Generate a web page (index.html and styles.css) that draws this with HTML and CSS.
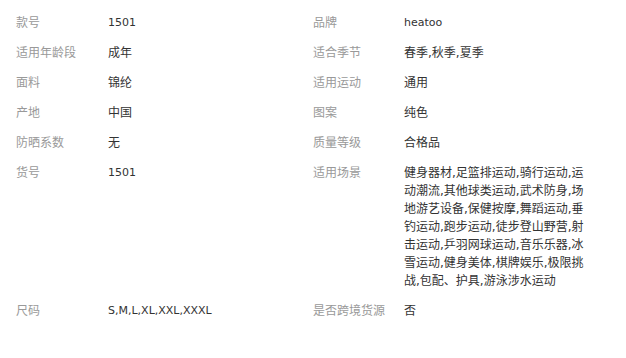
FILE: index.html
```html
<!DOCTYPE html>
<html lang="zh-CN">
<head>
<meta charset="utf-8">
<title>商品参数</title>
<link rel="stylesheet" href="styles.css">
</head>
<body>
<div class="params">
  <div class="label">款号</div><div class="value latin">1501</div>
  <div class="label">品牌</div><div class="value latin">heatoo</div>

  <div class="label">适用年龄段</div><div class="value">成年</div>
  <div class="label">适合季节</div><div class="value">春季,秋季,夏季</div>

  <div class="label">面料</div><div class="value">锦纶</div>
  <div class="label">适用运动</div><div class="value">通用</div>

  <div class="label">产地</div><div class="value">中国</div>
  <div class="label">图案</div><div class="value">纯色</div>

  <div class="label">防晒系数</div><div class="value">无</div>
  <div class="label">质量等级</div><div class="value">合格品</div>

  <div class="label">货号</div><div class="value latin">1501</div>
  <div class="label">适用场景</div><div class="value">健身器材,足篮排运动,骑行运动,运动潮流,其他球类运动,武术防身,场地游艺设备,保健按摩,舞蹈运动,垂钓运动,跑步运动,徒步登山野营,射击运动,乒羽网球运动,音乐乐器,冰雪运动,健身美体,棋牌娱乐,极限挑战,包配、护具,游泳涉水运动</div>

  <div class="label">尺码</div><div class="value latin">S,M,L,XL,XXL,XXXL</div>
  <div class="label">是否跨境货源</div><div class="value">否</div>
</div>
</body>
</html>
```

FILE: styles.css
```css
html, body {
  margin: 0;
  padding: 0;
  background: #ffffff;
}

body {
  font-family: "DejaVu Sans", "Noto Sans CJK SC", sans-serif;
  font-size: 12px;
  line-height: 18px;
  color: #333333;
}

.params {
  display: grid;
  grid-template-columns: 92px 205px 91px 186px;
  padding: 8px 0 0 16px;
}

.label,
.value {
  padding: 6px 0;
}

.label {
  color: #999999;
}

.value {
  color: #333333;
  word-break: break-all;
}

.latin {
  font-size: 11px;
}
```
